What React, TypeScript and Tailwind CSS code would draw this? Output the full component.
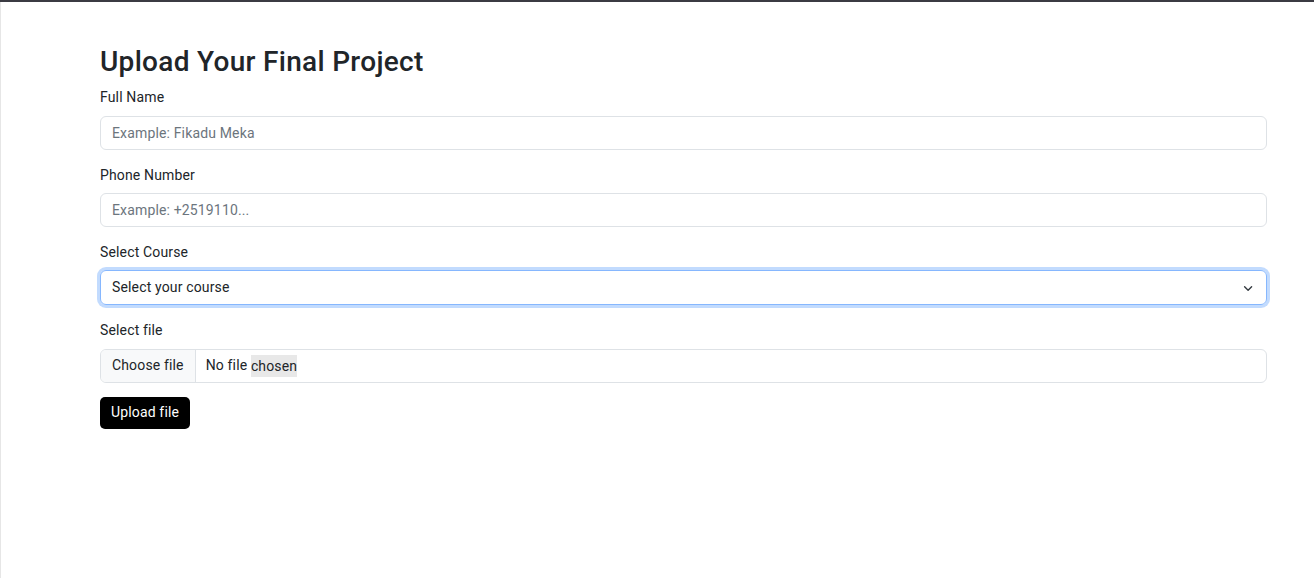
import React from "react";

export default function App() {
  return (
    <div
      className="min-h-[578px] w-[1314px] bg-white text-[#212529]"
      style={{ fontFamily: "Roboto, 'Liberation Sans', sans-serif" }}
    >
      <div className="h-[2px] bg-[#3b3b43]" />
      <div className="min-h-[576px] border-l border-[#e6e6e6]">
        <div className="ml-[99px] w-[1167px] pt-[43px]">
          <h3 className="mb-[8px] text-[28px] font-medium leading-[1.2] tracking-[0.3px]">
            Upload Your Final Project
          </h3>
          <form className="flex flex-col tracking-[0.15px]" onSubmit={(e) => e.preventDefault()}>
            <label className="mb-[8px] block text-[14px] leading-[21px]">Full Name</label>
            <input
              type="text"
              placeholder="Example: Fikadu Meka"
              className="h-[34px] w-full rounded-[6px] border border-[#dee2e6] px-[11px] text-[14px] tracking-[0.15px] text-[#212529] outline-none placeholder:text-[#6c757d]"
            />
            <label className="mb-[7px] mt-[15px] block text-[14px] leading-[21px]">Phone Number</label>
            <input
              type="text"
              placeholder="Example: +2519110..."
              className="h-[34px] w-full rounded-[6px] border border-[#dee2e6] px-[11px] text-[14px] tracking-[0.15px] text-[#212529] outline-none placeholder:text-[#6c757d]"
            />
            <label className="mb-[7px] mt-[15px] block text-[14px] leading-[21px]">Select Course</label>
            <div className="relative h-[35px] w-full rounded-[6px] border border-[#86b7fe] shadow-[0_0_0_3px_rgba(13,110,253,0.25)]">
              <div className="flex h-full items-center px-[11px] text-[14px]">Select your course</div>
              <svg
                className="absolute right-[10px] top-[10px]"
                width="16"
                height="16"
                viewBox="0 0 16 16"
              >
                <path
                  d="m3 6 5 5 5-5"
                  fill="none"
                  stroke="#343a40"
                  strokeWidth="2"
                  strokeLinecap="round"
                  strokeLinejoin="round"
                  transform="translate(2.5 1.5) scale(0.7)"
                />
              </svg>
            </div>
            <label className="mb-[8px] mt-[15px] block text-[14px] leading-[21px]">Select file</label>
            <div className="flex h-[34px] w-full items-stretch overflow-hidden rounded-[6px] border border-[#dee2e6] text-[14px]">
              <div className="flex items-center border-r border-[#dee2e6] bg-[#f8f9fa] px-[11px]">
                Choose file
              </div>
              <div className="flex items-center pl-[10px]">
                No file&nbsp;<span className="inline-block h-[22px] bg-[#e8e8e8] leading-[22px]">chosen</span>
              </div>
            </div>
            <div className="mt-[14px]">
              <button
                type="submit"
                className="h-[32px] rounded-[5px] bg-black px-[11px] text-[14px] tracking-[0.15px] text-white"
              >
                Upload file
              </button>
            </div>
          </form>
        </div>
      </div>
    </div>
  );
}
